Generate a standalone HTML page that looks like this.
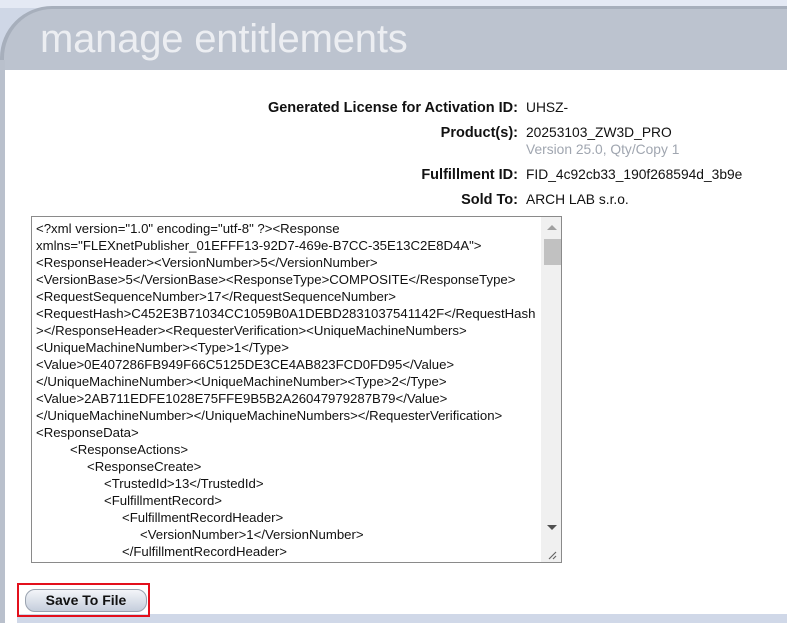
<!DOCTYPE html>
<html><head><style>
html,body{margin:0;padding:0;width:787px;height:623px;overflow:hidden;background:#fff;font-family:"Liberation Sans",sans-serif;}
.topband{position:absolute;left:0;top:0;width:787px;height:8px;background:#e4e9f4;}
.leftfill{position:absolute;left:0;top:8px;width:60px;height:62px;background:#cfd7e6;}
.hdr{position:absolute;left:0;top:6px;width:800px;height:64px;background:#bcc3cf;border-top:3px solid #a7afbc;border-left:4px solid #a7afbc;border-top-left-radius:52px;box-sizing:border-box;}
.title{position:absolute;left:40px;top:17px;font-size:40px;color:#eceef2;letter-spacing:-0.2px;}
.lstripe{position:absolute;left:0;top:60px;width:5px;height:563px;background:#b9c0cc;}
.bot{position:absolute;left:17px;top:614px;width:770px;height:9px;background:#d0d8e8;}
.lbl{position:absolute;right:269px;font-size:14.5px;font-weight:bold;color:#111;white-space:nowrap;}
.val{position:absolute;left:526px;font-size:13.8px;color:#111;white-space:nowrap;}
.ta{position:absolute;left:31px;top:216px;width:531px;height:347px;border:1px solid #8a8a8a;box-sizing:border-box;overflow:hidden;}
.txt{position:absolute;left:4px;top:3px;font-size:13.2px;line-height:17px;color:#111;white-space:pre;}
.sb{position:absolute;right:0;top:0;width:20px;height:345px;background:#f0f0f0;}
.thumb{position:absolute;left:3px;top:22px;width:17px;height:26px;background:#c1c1c1;}
.btnbox{position:absolute;left:17px;top:583px;width:133px;height:34px;border:2px solid #e3101c;box-sizing:border-box;}
.btn{position:absolute;left:6px;top:4px;width:122px;height:23px;border:1px solid #9aa3b0;border-radius:10px;background:linear-gradient(#f3f5f9,#c5cedc);box-sizing:border-box;font-size:14px;font-weight:bold;text-align:center;line-height:21px;color:#111;}
</style></head><body>
<div class="topband"></div>
<div class="leftfill"></div>
<div class="hdr"></div>
<div class="title">manage entitlements</div>
<div class="lstripe"></div>
<div class="bot"></div>
<div class="lbl" style="top:100px">Generated License for Activation ID:</div><div class="val" style="top:100px">UHSZ-</div>
<div class="lbl" style="top:125px">Product(s):</div><div class="val" style="top:125px">20253103_ZW3D_PRO</div>
<div class="val" style="top:142px;color:#a0a6b0">Version 25.0, Qty/Copy 1</div>
<div class="lbl" style="top:167px">Fulfillment ID:</div><div class="val" style="top:167px">FID_4c92cb33_190f268594d_3b9e</div>
<div class="lbl" style="top:192px">Sold To:</div><div class="val" style="top:192px">ARCH LAB s.r.o.</div>
<div class="ta"><div class="txt">&lt;?xml version="1.0" encoding="utf-8" ?&gt;&lt;Response
xmlns="FLEXnetPublisher_01EFFF13-92D7-469e-B7CC-35E13C2E8D4A"&gt;
&lt;ResponseHeader&gt;&lt;VersionNumber&gt;5&lt;/VersionNumber&gt;
&lt;VersionBase&gt;5&lt;/VersionBase&gt;&lt;ResponseType&gt;COMPOSITE&lt;/ResponseType&gt;
&lt;RequestSequenceNumber&gt;17&lt;/RequestSequenceNumber&gt;
&lt;RequestHash&gt;C452E3B71034CC1059B0A1DEBD2831037541142F&lt;/RequestHash
&gt;&lt;/ResponseHeader&gt;&lt;RequesterVerification&gt;&lt;UniqueMachineNumbers&gt;
&lt;UniqueMachineNumber&gt;&lt;Type&gt;1&lt;/Type&gt;
&lt;Value&gt;0E407286FB949F66C5125DE3CE4AB823FCD0FD95&lt;/Value&gt;
&lt;/UniqueMachineNumber&gt;&lt;UniqueMachineNumber&gt;&lt;Type&gt;2&lt;/Type&gt;
&lt;Value&gt;2AB711EDFE1028E75FFE9B5B2A26047979287B79&lt;/Value&gt;
&lt;/UniqueMachineNumber&gt;&lt;/UniqueMachineNumbers&gt;&lt;/RequesterVerification&gt;
&lt;ResponseData&gt;
<span style="padding-left:34px">&lt;ResponseActions&gt;</span>
<span style="padding-left:51px">&lt;ResponseCreate&gt;</span>
<span style="padding-left:68px">&lt;TrustedId&gt;13&lt;/TrustedId&gt;</span>
<span style="padding-left:68px">&lt;FulfillmentRecord&gt;</span>
<span style="padding-left:86px">&lt;FulfillmentRecordHeader&gt;</span>
<span style="padding-left:104px">&lt;VersionNumber&gt;1&lt;/VersionNumber&gt;</span>
<span style="padding-left:86px">&lt;/FulfillmentRecordHeader&gt;</span></div>
<div class="sb"><div style="position:absolute;left:6px;top:8px;width:0;height:0;border-left:5px solid transparent;border-right:5px solid transparent;border-bottom:5px solid #a0a0a0"></div><div class="thumb"></div><div style="position:absolute;left:6px;top:308px;width:0;height:0;border-left:5px solid transparent;border-right:5px solid transparent;border-top:5px solid #505050"></div>
<svg style="position:absolute;left:6px;top:333px" width="10" height="10"><path d="M9 2L2 9M9 6L6 9" stroke="#666" stroke-width="1.2"/></svg></div>
</div>
<div class="btnbox"><div class="btn">Save To File</div></div>
</body></html>
